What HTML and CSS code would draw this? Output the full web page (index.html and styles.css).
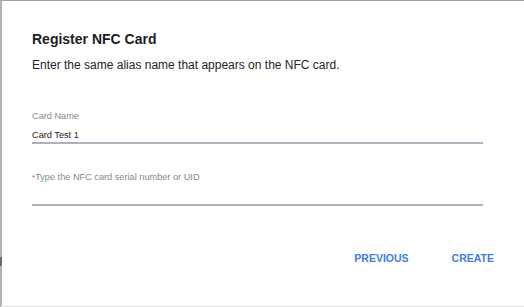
FILE: index.html
```html
<!DOCTYPE html>
<html>
<head>
<meta charset="utf-8">
<link rel="stylesheet" href="styles.css">
</head>
<body>
<div class="frame">
  <span class="edge-mark"></span>
  <div class="dialog">
    <h1 class="title">Register NFC Card</h1>
    <p class="subtitle">Enter the same alias name that appears on the NFC card.</p>
    <div class="field field-name">
      <label class="label">Card Name</label>
      <div class="value">Card Test 1</div>
    </div>
    <div class="field field-serial">
      <label class="label"><span class="req">*</span>Type the NFC card serial number or UID</label>
      <div class="value"></div>
    </div>
    <div class="actions">
      <button class="btn btn-prev">PREVIOUS</button>
      <button class="btn btn-create">CREATE</button>
    </div>
  </div>
</div>
</body>
</html>
```
FILE: styles.css
```css
html, body {
  margin: 0;
  padding: 0;
  background: #ffffff;
}
body {
  font-family: "Liberation Sans", Arial, Helvetica, sans-serif;
  width: 524px;
  height: 307px;
  overflow: hidden;
}
.frame {
  position: relative;
  box-sizing: border-box;
  width: 524px;
  height: 307px;
  border-top: 1px solid #a3a3a3;
  border-left: 2px solid #b4b4b4;
  border-bottom: 1px solid #e2e2e2;
  background: #ffffff;
}
.edge-mark {
  position: absolute;
  left: -2px;
  top: 256px;
  width: 2px;
  height: 9px;
  background: #6a6a6a;
}
.dialog {
  padding: 30px 0 0 30px;
  width: 451px;
}
.title {
  margin: 0;
  font-size: 14px;
  font-weight: bold;
  color: #1b1d21;
  line-height: 16px;
}
.subtitle {
  margin: 11px 0 0 0;
  font-size: 12px;
  line-height: 14px;
  color: #222428;
}
.field {
  display: flex;
  flex-direction: column;
}
.field-name {
  margin-top: 39px;
}
.field-serial {
  margin-top: 28px;
}
.label {
  font-size: 9.2px;
  line-height: 11px;
  color: #85888e;
}
.req {
  color: #e0434b;
  font-size: 8px;
  vertical-align: top;
}
.value {
  margin-top: 8px;
  font-size: 9.2px;
  line-height: 11px;
  color: #1f2125;
  height: 11px;
  padding-bottom: 1px;
  border-bottom: 2px solid #a9b2be;
}
.field-serial .value {
  margin-top: 9px;
}
.actions {
  display: flex;
  justify-content: flex-end;
  gap: 43px;
  margin-top: 46px;
  width: 462px;
}
.btn {
  background: none;
  border: none;
  padding: 0;
  font-family: "Liberation Sans", Arial, Helvetica, sans-serif;
  font-size: 10.5px;
  font-weight: bold;
  line-height: 12px;
  color: #3b7de9;
  letter-spacing: 0;
}
```
